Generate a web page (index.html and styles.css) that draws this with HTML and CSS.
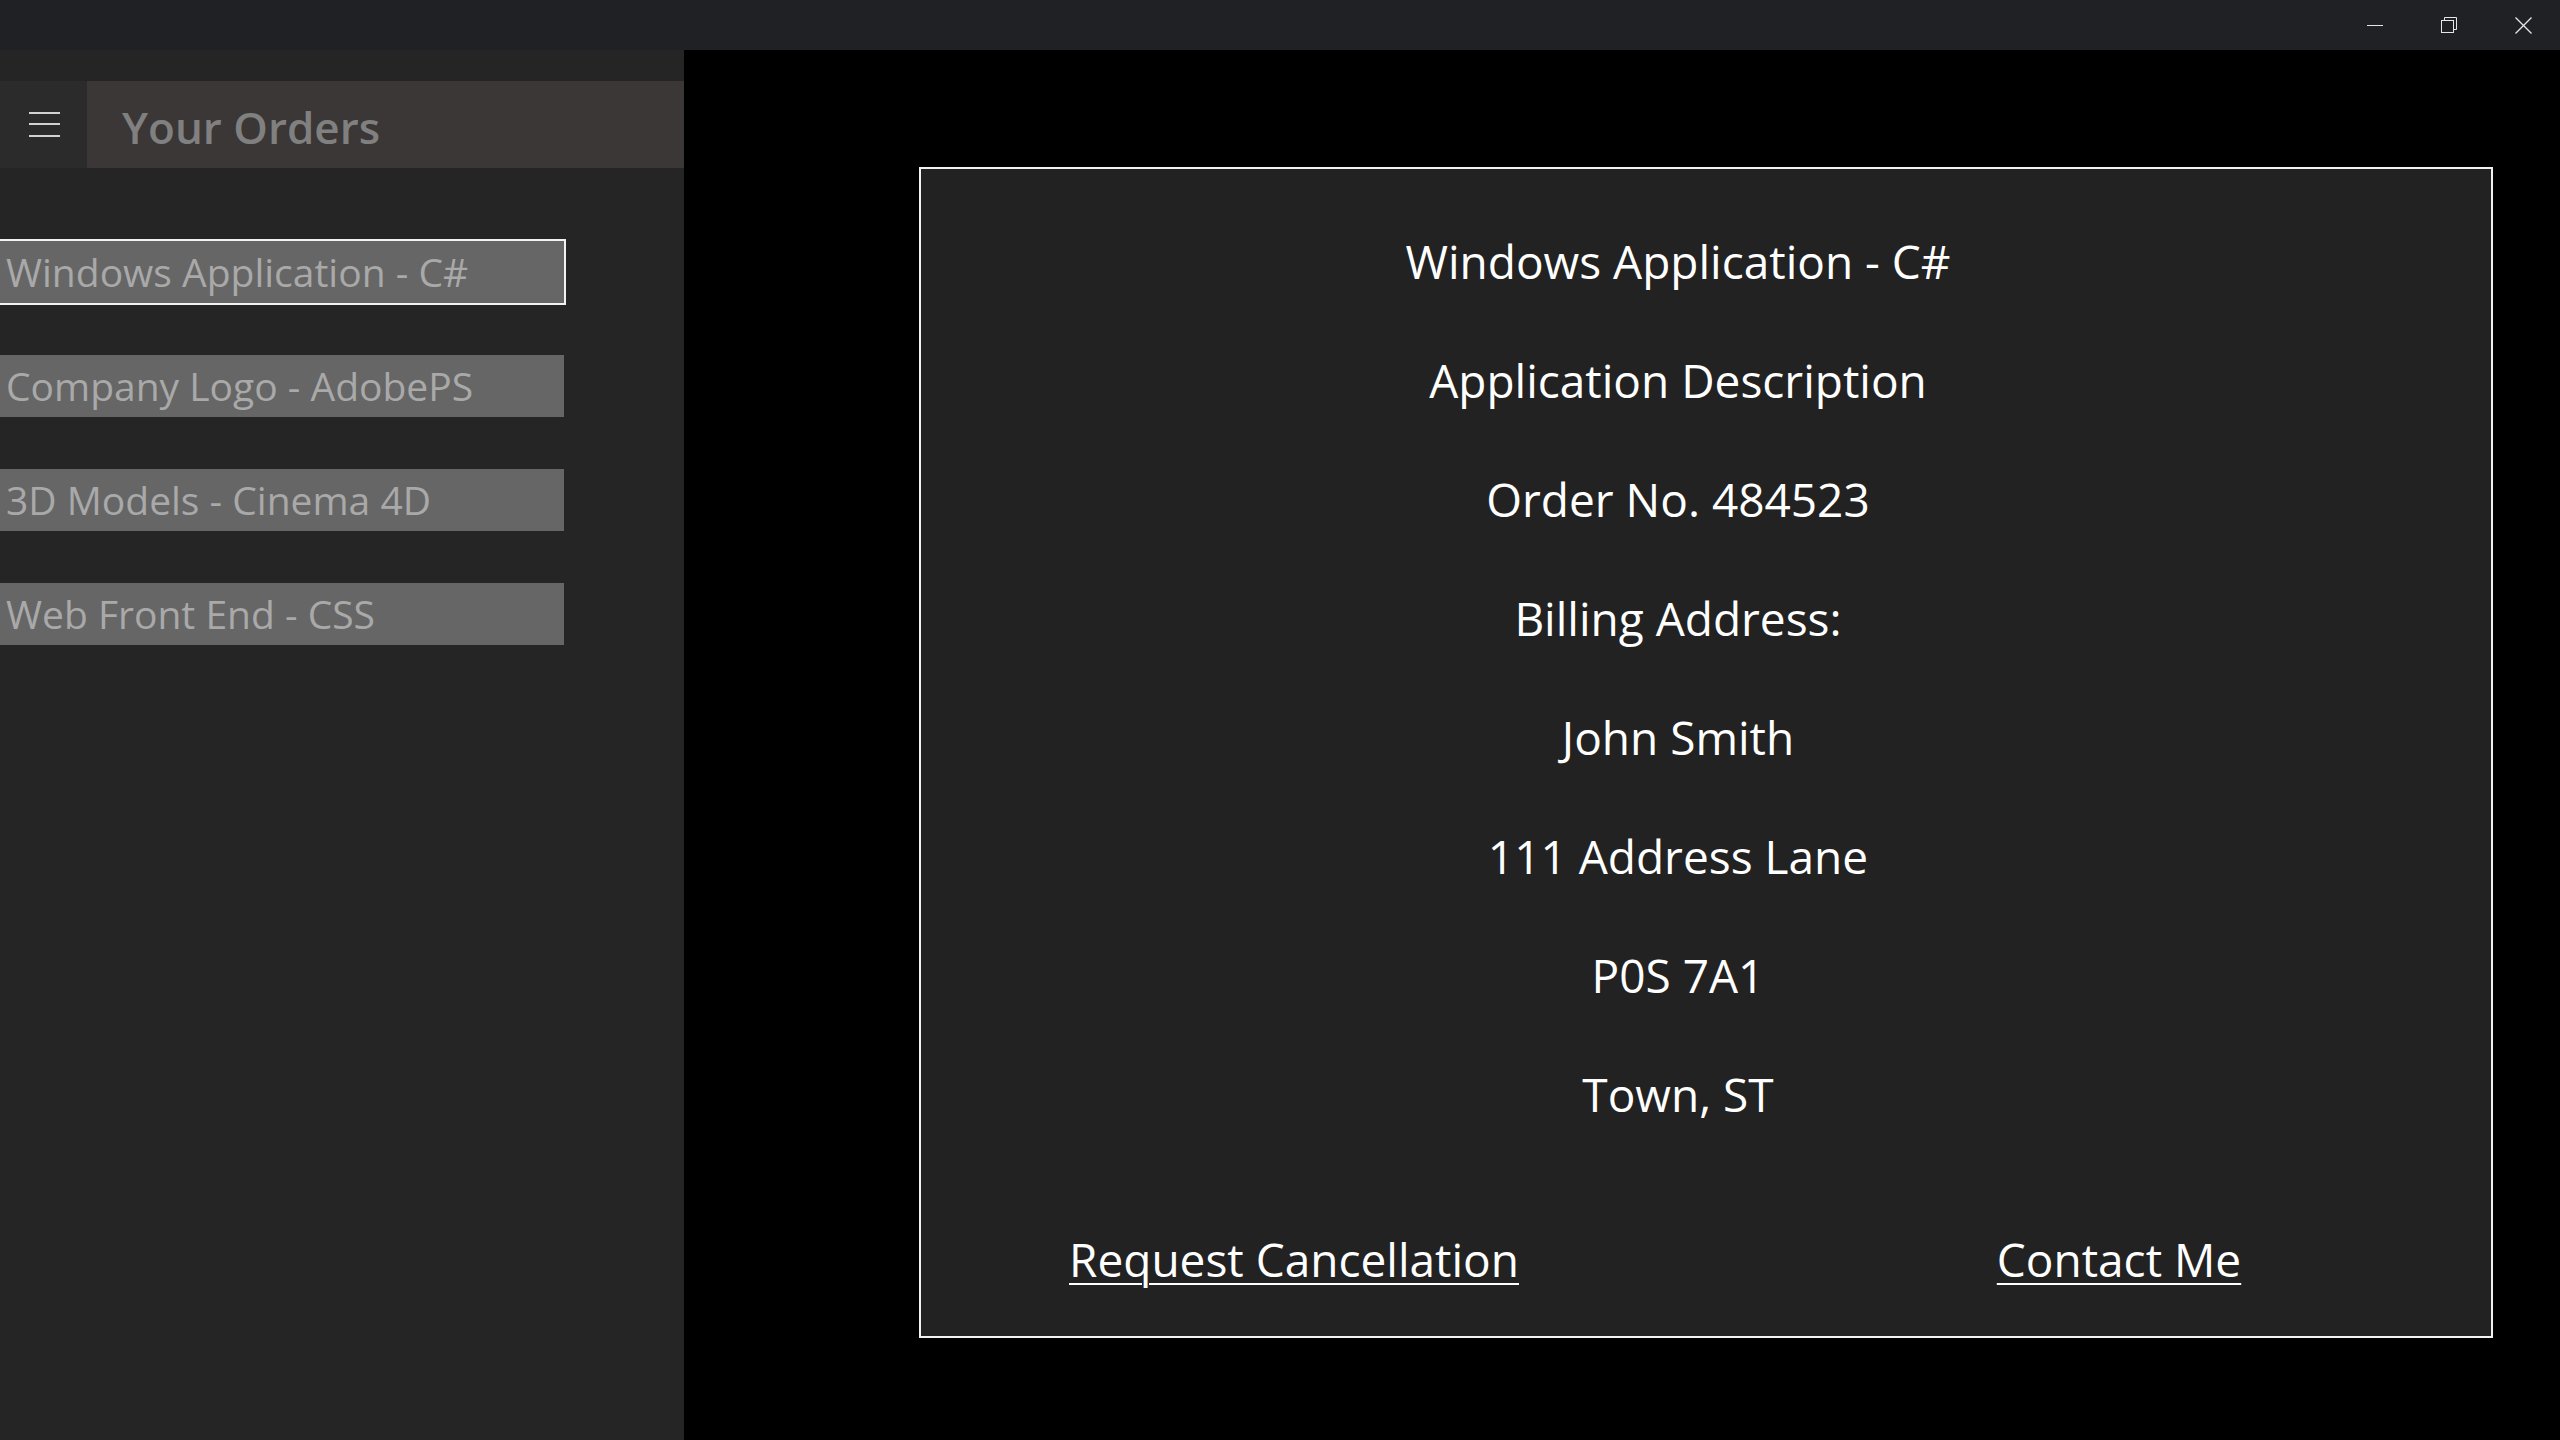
FILE: index.html
```html
<!DOCTYPE html>
<html lang="en">
<head>
<meta charset="utf-8">
<title>Your Orders</title>
<link rel="stylesheet" href="styles.css">
</head>
<body>
<div class="window">
  <div class="titlebar">
    <div class="caption-btn">
      <svg width="16" height="16" viewBox="0 0 16 16"><line x1="0" y1="8.5" x2="16" y2="8.5" stroke="#e6e6e6" stroke-width="1"/></svg>
    </div>
    <div class="caption-btn">
      <svg width="16" height="16" viewBox="0 0 16 16" fill="none" stroke="#e6e6e6" stroke-width="1"><rect x="0.5" y="3.5" width="12" height="12"/><path d="M3.5 3.5 V0.5 H15.5 V12.5 H12.5"/></svg>
    </div>
    <div class="caption-btn">
      <svg width="17" height="17" viewBox="0 0 17 17" stroke="#e6e6e6" stroke-width="1.3"><line x1="0.5" y1="0.5" x2="16.5" y2="16.5"/><line x1="16.5" y1="0.5" x2="0.5" y2="16.5"/></svg>
    </div>
  </div>
  <div class="app">
    <aside class="sidebar">
      <div class="pane-header">
        <div class="hamburger">
          <svg width="31" height="25" viewBox="0 0 31 25" stroke="#d2d2d2" stroke-width="2"><line x1="0" y1="1" x2="31" y2="1"/><line x1="0" y1="12" x2="31" y2="12"/><line x1="0" y1="24" x2="31" y2="24"/></svg>
        </div>
        <div class="pane-title">Your Orders</div>
      </div>
      <ul class="order-list">
        <li class="order-item selected">Windows Application - C#</li>
        <li class="order-item">Company Logo - AdobePS</li>
        <li class="order-item">3D Models - Cinema 4D</li>
        <li class="order-item">Web Front End - CSS</li>
      </ul>
    </aside>
    <main class="content">
      <section class="detail-card">
        <div class="details">
          <p class="line">Windows Application - C#</p>
          <p class="line">Application Description</p>
          <p class="line">Order No. 484523</p>
          <p class="line">Billing Address:</p>
          <p class="line">John Smith</p>
          <p class="line">111 Address Lane</p>
          <p class="line">P0S 7A1</p>
          <p class="line">Town, ST</p>
        </div>
        <div class="actions">
          <a class="action-link" href="#">Request Cancellation</a>
          <a class="action-link" href="#">Contact Me</a>
        </div>
      </section>
    </main>
  </div>
</div>
</body>
</html>
```

FILE: styles.css
```css
* { box-sizing: border-box; }

html, body {
  margin: 0;
  padding: 0;
  background: #000000;
}

body {
  font-family: "Open Sans", "Noto Sans", "DejaVu Sans", sans-serif;
  width: 2560px;
  height: 1440px;
  overflow: hidden;
}

.window {
  display: flex;
  flex-direction: column;
  width: 2560px;
  height: 1440px;
}

.titlebar {
  height: 50px;
  flex: none;
  background: #202125;
  display: flex;
  justify-content: flex-end;
}

.caption-btn {
  width: 74px;
  height: 50px;
  display: flex;
  align-items: center;
  justify-content: center;
}

.caption-btn svg { display: block; }

.app {
  flex: 1;
  display: flex;
  min-height: 0;
}

.sidebar {
  width: 684px;
  flex: none;
  background: #252525;
  padding-top: 31px;
}

.pane-header {
  height: 87px;
  display: flex;
}

.hamburger {
  width: 87px;
  background: #2b2b2b;
  display: flex;
  align-items: center;
  justify-content: center;
  padding-left: 1px;
}

.hamburger svg { display: block; }

.pane-title {
  flex: 1;
  background: #3a3736;
  color: #808080;
  font-size: 44px;
  font-weight: 600;
  line-height: 83px;
  padding-top: 5px;
  padding-left: 35px;
  white-space: nowrap;
}

.order-list {
  list-style: none;
  margin: 73px 0 0 0;
  padding: 0;
  display: flex;
  flex-direction: column;
  gap: 52px;
}

.order-item {
  width: 564px;
  height: 62px;
  background: #666666;
  color: #a9a9a9;
  font-size: 39px;
  line-height: 62px;
  padding-left: 6px;
  white-space: nowrap;
}

.order-item.selected {
  outline: 2px solid #f2f2f2;
}

.content {
  flex: 1;
  background: #000000;
  padding: 117px 0 0 235px;
}

.detail-card {
  width: 1574px;
  height: 1171px;
  background: #222222;
  border: 2px solid #f2f2f2;
  padding-top: 33px;
}

.details {
  padding-right: 56px;
}

.line {
  margin: 0;
  color: #ffffff;
  font-size: 46px;
  line-height: 119px;
  text-align: center;
  white-space: nowrap;
}

.actions {
  margin-top: 75px;
  display: grid;
  grid-template-columns: 746px 400px;
  column-gap: 252px;
}

.action-link {
  color: #ffffff;
  font-size: 46px;
  line-height: 60px;
  text-align: center;
  text-decoration: underline;
  text-decoration-thickness: 2px;
  text-underline-offset: 6px;
  white-space: nowrap;
}
```
